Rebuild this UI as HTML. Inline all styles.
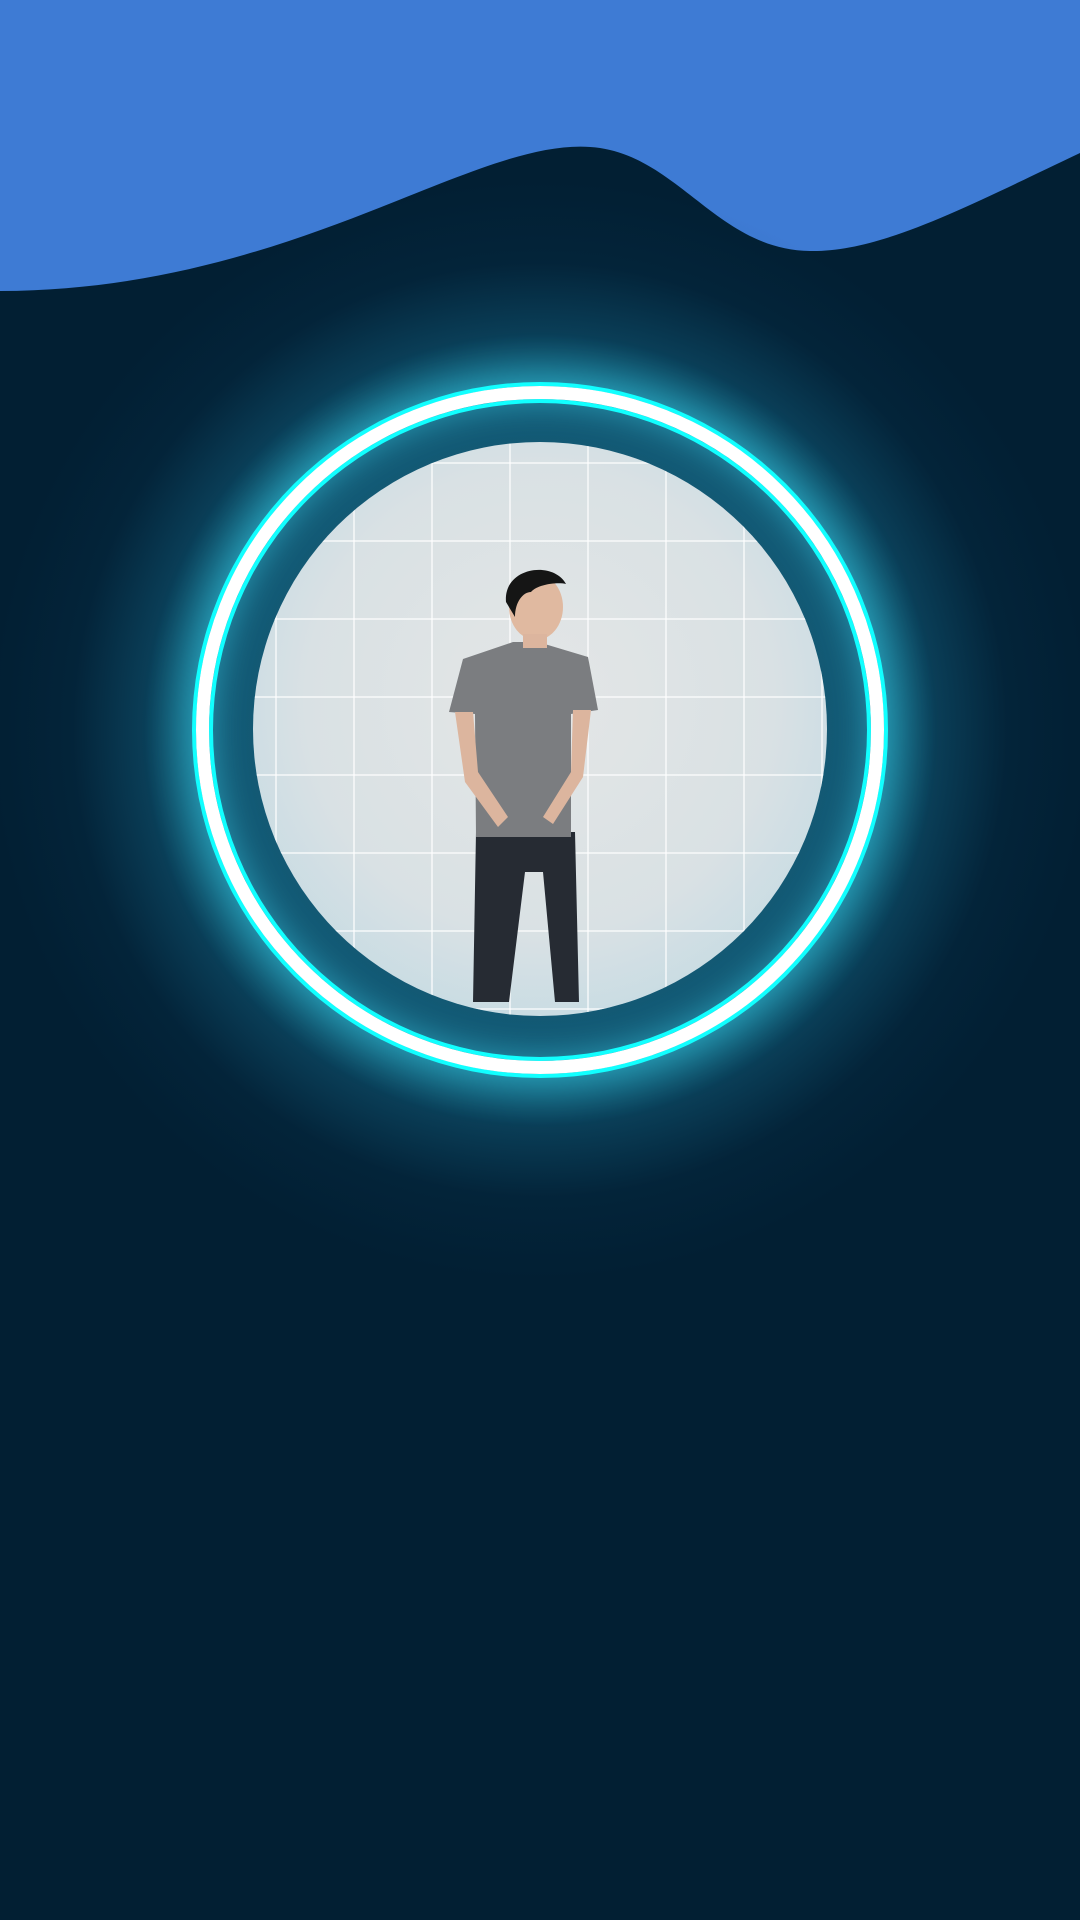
<!DOCTYPE html>
<html><head><style>
html,body{margin:0;padding:0;}
body{width:1080px;height:1920px;background:#021f33;position:relative;overflow:hidden;}
.glow{position:absolute;left:-10px;top:180px;width:1100px;height:1100px;border-radius:50%;
background:radial-gradient(circle closest-side,rgba(40,170,200,0.7) 0%,rgba(40,170,200,0.6) 63%,rgba(25,120,155,0.35) 72%,rgba(10,65,95,0.15) 85%,rgba(2,31,51,0) 100%);}
.ring{position:absolute;left:196px;top:386px;width:688px;height:688px;box-sizing:border-box;border-radius:50%;
border:13px solid #fff;box-shadow:0 0 0 4px #1ff,inset 0 0 0 4px #1ff,0 0 40px 10px rgba(60,210,235,0.45),inset 0 0 30px 6px rgba(60,210,235,0.45);}
.inner{position:absolute;left:209px;top:399px;width:662px;height:662px;border-radius:50%;
background:radial-gradient(circle,#0e4d66 0%,#155e7a 86%,#2a93b0 100%);}
.photo{position:absolute;left:253px;top:442px;width:574px;height:574px;border-radius:50%;overflow:hidden;
background:radial-gradient(circle at 50% 45%,#e4e6e6 0%,#d9e1e4 55%,#b5d6e2 100%);}
.grid{position:absolute;inset:0;background-image:linear-gradient(90deg,rgba(255,255,255,.6) 2px,transparent 2px),linear-gradient(rgba(255,255,255,.6) 2px,transparent 2px);background-size:78px 78px;background-position:22px 20px;}
</style></head><body>
<svg style="position:absolute;left:0;top:0" width="1080" height="300" viewBox="0 0 1080 300">
<path d="M0 0H1080V153C960 210 880 252 810 251C720 250 680 160 600 148C480 130 300 290 0 291Z" fill="#3e7bd4"/>
</svg>
<div class="glow"></div>
<div class="inner"></div>
<div class="photo"><div class="grid"></div>
<svg style="position:absolute;left:0;top:0" width="574" height="574">
<path d="M220 560L223 390L322 390L326 560L302 560L290 430L272 430L256 560Z" fill="#262b33"/>
<path d="M210 217L260 200L285 200L335 215L345 268L318 272L318 395L223 395L222 272L196 270Z" fill="#7b7d80"/>
<path d="M202 270L220 270L225 330L255 375L245 385L212 340Z" fill="#dcb59e"/>
<path d="M338 268L320 268L318 330L290 375L300 382L330 335Z" fill="#dcb59e"/>
<ellipse cx="283" cy="165" rx="27" ry="33" fill="#e0b9a0"/>
<path d="M253 160C250 125 300 118 313 142C305 140 285 142 278 150C270 150 262 160 262 175Z" fill="#151515"/>
<rect x="270" y="192" width="24" height="14" fill="#dcb59e"/>
</svg></div>
<div class="ring"></div>
</body></html>
